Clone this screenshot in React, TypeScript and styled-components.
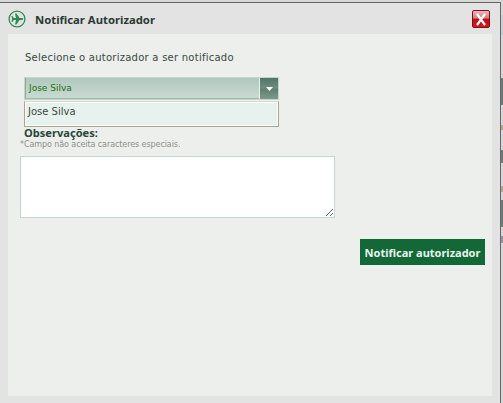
import React from 'react';
import styled, { createGlobalStyle } from 'styled-components';

const GlobalStyle = createGlobalStyle`
  html, body {
    margin: 0;
    padding: 0;
    width: 503px;
    height: 403px;
    overflow: hidden;
    background: #dcdcdc;
  }
`;

// Dialog, with the page behind it showing through on the right edge
const Page = styled.div`
  width: 503px;
  height: 403px;
  padding-top: 2px;
  box-sizing: border-box;
  background: linear-gradient(
    #d8d8d8 0 15px,
    #c8d0d4 15px 35px,
    #d8d8d8 35px 78px,
    #6b7d78 78px 105px,
    #d8d8d8 105px 125px,
    #b5a890 125px 130px,
    #d8d8d8 130px 150px,
    #6b7d78 150px 163px,
    #d8d8d8 163px 186px,
    #b5a890 186px 192px,
    #d8d8d8 192px 200px,
    #6b7d78 200px 227px,
    #d8d8d8 227px 236px,
    #9a93a8 236px 243px,
    #d8d8d8 243px
  );
`;

const Dialog = styled.div`
  width: 501px;
  height: 401px;
  box-sizing: border-box;
  background: #e3e3e3;
  border-top: 1px solid #666;
  border-right: 1px solid #666;
  padding: 0 8px 7px 8px;
  display: flex;
  flex-direction: column;
  font-family: Tahoma, "DejaVu Sans", Verdana, sans-serif;
`;

const TitleBar = styled.div`
  height: 31px;
  flex: none;
  box-sizing: border-box;
  padding: 1px 2px 0 0;
  display: flex;
  align-items: center;
  gap: 9px;
`;

const TitleText = styled.h1`
  margin: 0;
  flex: 1;
  font-family: "Noto Sans", sans-serif;
  font-size: 11.3px;
  font-weight: 700;
  color: #2a3a33;
`;

const CloseButton = styled.button`
  width: 18px;
  height: 18px;
  padding: 0;
  box-sizing: border-box;
  border: 1px solid #7a1015;
  border-radius: 2px;
  background: linear-gradient(#e9b9bb 0%, #d8777b 45%, #c40c14 50%, #cf1a20 100%);
  display: flex;
  align-items: center;
  justify-content: center;
`;

const Content = styled.div`
  flex: 1;
  background: #edefed;
  padding: 18px 7px 0 12px;
  display: flex;
  flex-direction: column;
`;

const SelectLabel = styled.div`
  font-size: 10px;
  line-height: 12px;
  letter-spacing: 0.25px;
  font-weight: 400;
  color: #38493f;
  margin-left: 5px;
`;

// Combo
const Combo = styled.div`
  width: 255px;
  margin: 13px 0 0 4px;
`;

const ComboHead = styled.div`
  height: 23px;
  box-sizing: border-box;
  display: flex;
  border: 1px solid #c3d5cd;
`;

const ComboValue = styled.div`
  flex: 1;
  padding-left: 3px;
  font-size: 9px;
  line-height: 20px;
  color: #1a6e0c;
  background: linear-gradient(#b1c8bd, #c9dad2);
  border-left: 1px solid #8fa99d;
  border-bottom: 1px solid #a3b5ac;
`;

const ComboArrow = styled.div`
  width: 18px;
  margin-left: 1px;
  background: linear-gradient(#4f7565 0%, #6d8d80 48%, #5e8070 52%, #7b9a8d 100%);
  display: flex;
  align-items: center;
  justify-content: center;
`;

const ComboList = styled.div`
  height: 26px;
  box-sizing: border-box;
  background: #e7f1ee;
  border: 1px solid #a3a690;
  border-top-color: #d7d9cc;
  box-shadow: inset 1px 1px 0 #fff, inset -1px -1px 0 #fff;
  margin-top: 1px;
  padding-left: 3px;
  font-size: 10px;
  line-height: 19px;
  color: #3c4a44;
`;

// Observacoes
const NotesLabel = styled.div`
  font-family: "Noto Sans", sans-serif;
  font-size: 11.1px;
  line-height: 12px;
  font-weight: 700;
  color: #27473a;
  margin: 0 0 0 4px;
`;

const Hint = styled.div`
  font-size: 8px;
  line-height: 12px;
  letter-spacing: -0.08px;
  color: #8b8f8c;
`;

const Notes = styled.textarea`
  display: block;
  width: 315px;
  height: 62px;
  box-sizing: border-box;
  margin: 5px 0 0 0;
  background: #fff;
  border: 1px solid #c4d6d0;
  outline: none;
`;

const Actions = styled.div`
  display: flex;
  justify-content: flex-end;
  margin-top: 21px;
`;

const NotifyButton = styled.button`
  width: 125px;
  height: 26px;
  padding: 0;
  border: none;
  background: #126836;
  color: #e9f3ee;
  font-family: "Noto Sans", sans-serif;
  font-size: 11px;
  font-weight: 700;
  white-space: nowrap;
`;

const App: React.FC = () => (
  <Page>
    <GlobalStyle />
    <Dialog>
      <TitleBar>
        <svg width="18" height="18" viewBox="0 0 18 18" fill="none">
          <circle cx="9" cy="9" r="7.9" stroke="#2f8a55" strokeWidth="1.3" />
          <path
            d="M3.5 6h1l1.2 2H8L7 3.6h1.5L11.6 8h2.2c.8 0 1.4.4 1.4 1s-.6 1-1.4 1h-2.2l-3.1 4.4H7L8 10H5.7l-1.2 2h-1l.6-3z"
            fill="#2f8a55"
          />
        </svg>
        <TitleText>Notificar Autorizador</TitleText>
        <CloseButton aria-label="Fechar">
          <svg width="12" height="13" viewBox="0 0 12 13">
            <path d="M2 1l8 11M10 1L2 12" stroke="#fff" strokeWidth="2.2" />
          </svg>
        </CloseButton>
      </TitleBar>
      <Content>
        <SelectLabel>Selecione o autorizador a ser notificado</SelectLabel>
        <Combo>
          <ComboHead>
            <ComboValue>Jose Silva</ComboValue>
            <ComboArrow>
              <svg width="7" height="4" viewBox="0 0 7 4">
                <path d="M0 0h7L3.5 4z" fill="#fff" />
              </svg>
            </ComboArrow>
          </ComboHead>
          <ComboList>Jose Silva</ComboList>
        </Combo>
        <NotesLabel>Observações:</NotesLabel>
        <Hint>*Campo não aceita caracteres especiais.</Hint>
        <Notes />
        <Actions>
          <NotifyButton>Notificar autorizador</NotifyButton>
        </Actions>
      </Content>
    </Dialog>
  </Page>
);

export default App;
